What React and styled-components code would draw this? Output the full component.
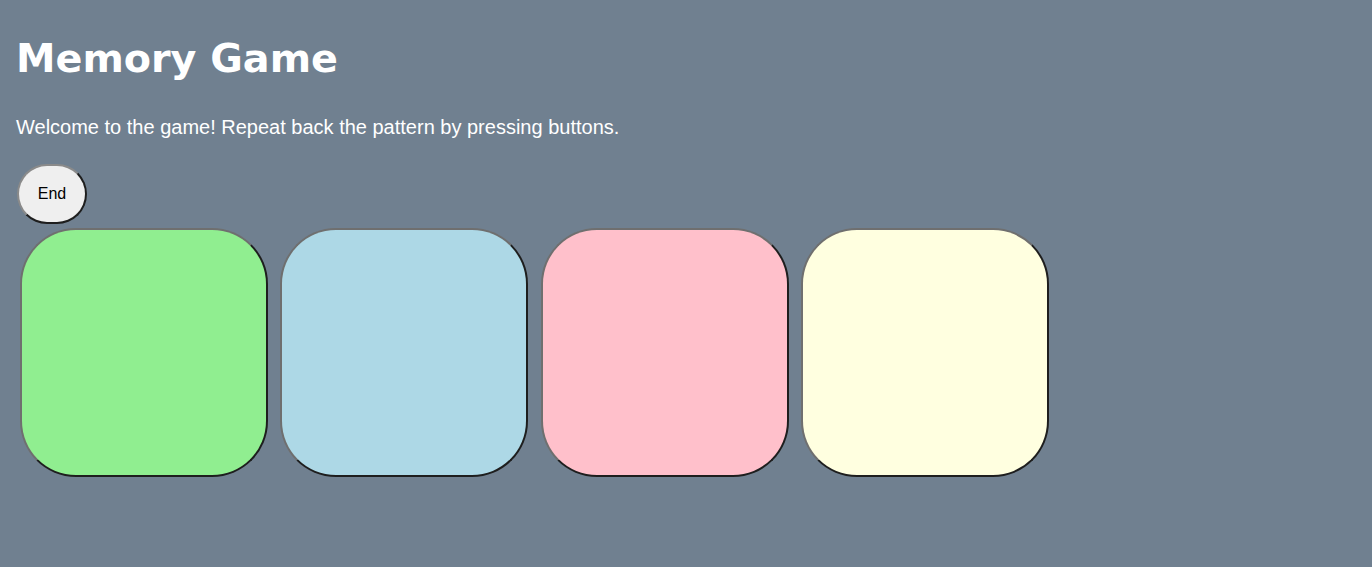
import React from "react";
import styled, { createGlobalStyle } from "styled-components";

const COLORS = ["lightgreen", "lightblue", "pink", "lightyellow"];

export default function App() {
  return (
    <>
      <GlobalStyle />
      <Page>
        <Title>Memory Game</Title>
        <Intro>Welcome to the game! Repeat back the pattern by pressing buttons.</Intro>
        <EndButton>End</EndButton>
        <Board>
          {COLORS.map((color) => (
            <Tile key={color} $color={color} />
          ))}
        </Board>
      </Page>
    </>
  );
}

const GlobalStyle = createGlobalStyle`
  html, body {
    margin: 0;
    background: slategray;
    height: 100%;
  }
  body {
    font-family: "Liberation Sans", Arial, sans-serif;
  }
`;

const Page = styled.div`
  padding: 35px 16px 0 16px;
  display: flex;
  flex-direction: column;
  align-items: flex-start;
`;

const Title = styled.h1`
  margin: 0;
  font-family: "DejaVu Sans", Verdana, sans-serif;
  font-size: 39.7px;
  line-height: 46px;
  font-weight: bold;
  color: white;
`;

const Intro = styled.p`
  margin: 35px 0 0 0;
  font-size: 20px;
  line-height: 23px;
  color: white;
`;

const EndButton = styled.button`
  margin: 25px 0 0 1px;
  width: 70px;
  height: 60px;
  border-radius: 30px;
  background: #efefef;
  border: 2px solid;
  border-color: #8a8a8a #1e1e1e #1e1e1e #8a8a8a;
  font-family: "Liberation Sans", Arial, sans-serif;
  font-size: 16px;
  color: black;
  padding: 0;
`;

const Board = styled.div`
  display: flex;
  gap: 12.33px;
  margin: 4px 0 0 4px;
`;

const Tile = styled.button`
  width: 248px;
  height: 249px;
  border-radius: 56px;
  background: ${(p) => p.$color};
  border: 2px solid;
  border-color: #6f6f6f #1e1e1e #1e1e1e #6f6f6f;
  padding: 0;
`;
